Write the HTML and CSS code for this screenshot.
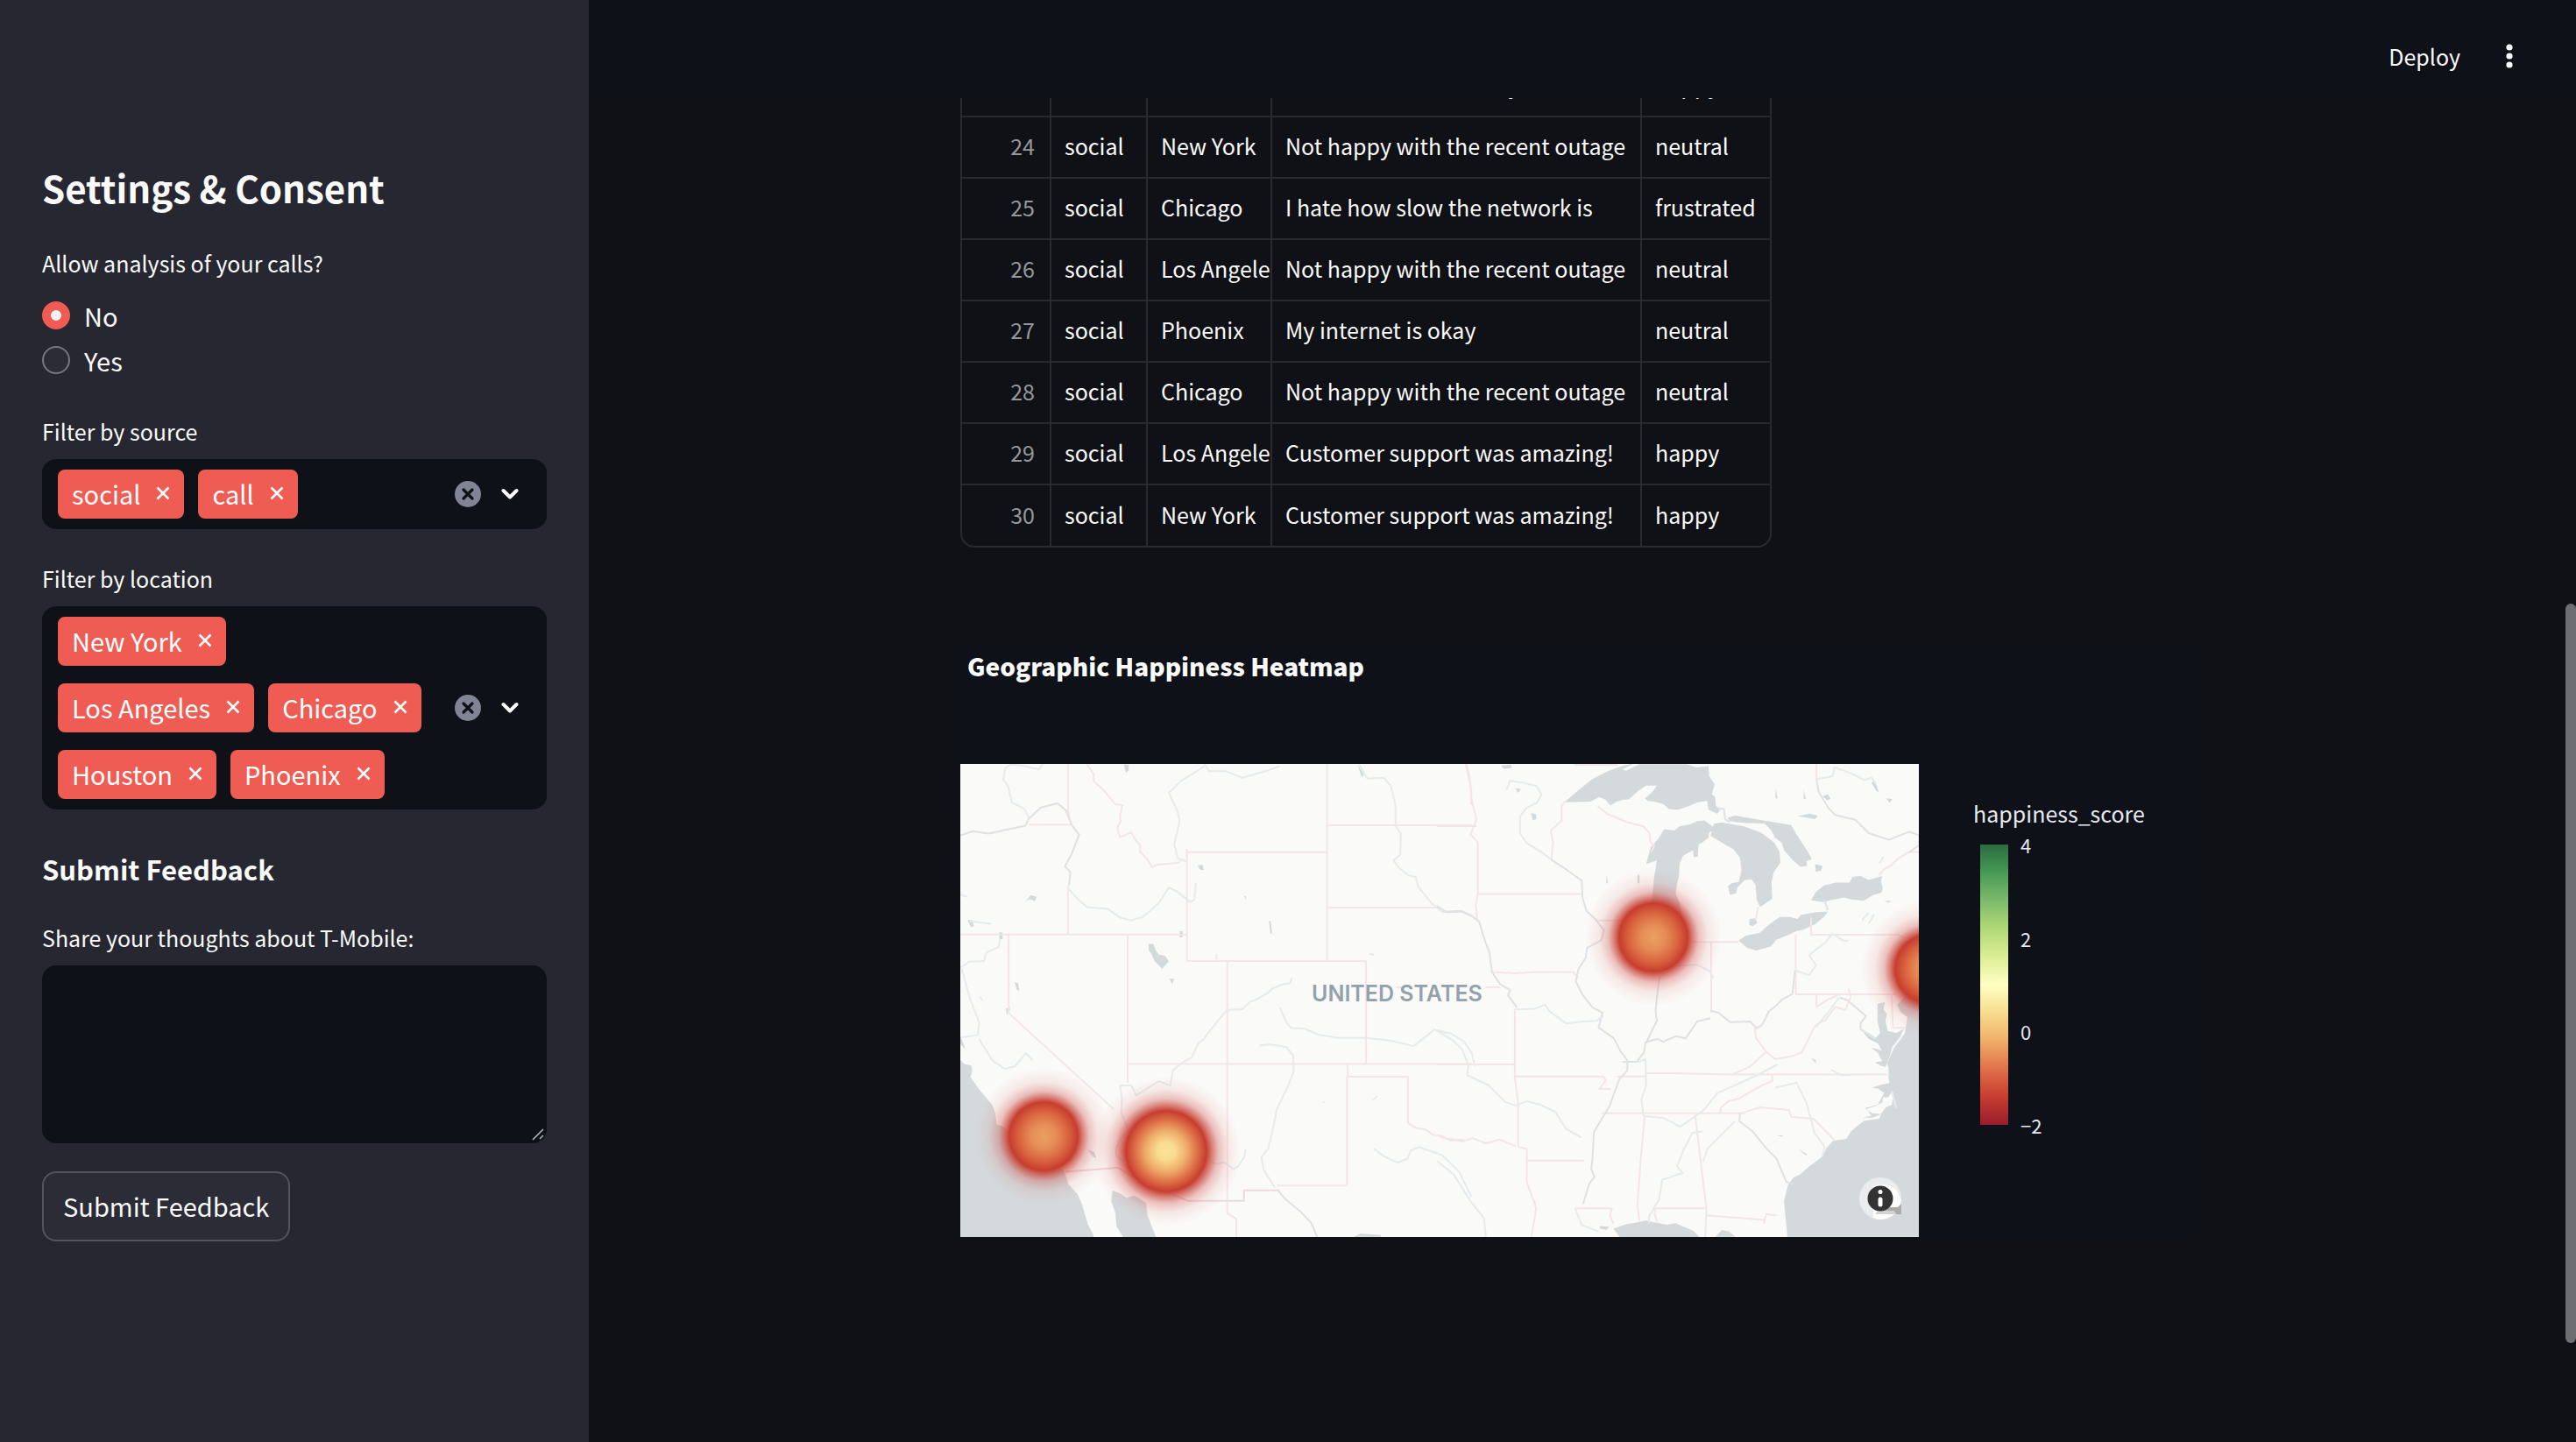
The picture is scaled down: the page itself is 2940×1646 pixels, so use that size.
FILE: index.html
```html
<!DOCTYPE html>
<html lang="en">
<head>
<meta charset="utf-8">
<meta name="viewport" content="width=device-width, initial-scale=1">
<title>Customer Happiness Dashboard</title>
<link rel="stylesheet" href="styles.css">
</head>
<body>
<svg class="defs" aria-hidden="true">
  <symbol id="cross" viewBox="0 0 16 16"><path d="M1.5 1.5l13 13M14.500 1.500l-13 13" stroke="currentColor" stroke-width="2.600" fill="none"/></symbol>
  <symbol id="clear" viewBox="0 0 30 30"><circle cx="15" cy="15" r="15" fill="#808495"/><path d="M10 10l10 10M20 10l-10 10" stroke="#0e1117" stroke-width="3.200" stroke-linecap="round"/></symbol>
  <symbol id="chevron" viewBox="0 0 20 14"><path d="M2.500 3l7.500 7.500L17.500 3" stroke="currentColor" stroke-width="4" stroke-linecap="round" stroke-linejoin="round" fill="none"/></symbol>
</svg>

<aside class="sidebar">
  <h2 class="sidebar-title">Settings &amp; Consent</h2>

  <fieldset class="field radio-group">
    <legend class="label">Allow analysis of your calls?</legend>
    <label class="radio"><input type="radio" name="consent" checked>No</label>
    <label class="radio"><input type="radio" name="consent">Yes</label>
  </fieldset>

  <div class="field" role="group" aria-labelledby="source-label">
    <div class="label" id="source-label">Filter by source</div>
    <div class="multiselect">
      <div class="tags">
        <button class="tag" type="button">social<svg class="cross"><use href="#cross"/></svg></button>
        <button class="tag" type="button">call<svg class="cross"><use href="#cross"/></svg></button>
      </div>
      <button class="icon-button" type="button" aria-label="Clear all"><svg class="clear"><use href="#clear"/></svg></button>
      <button class="icon-button" type="button" aria-label="Open"><svg class="chevron"><use href="#chevron"/></svg></button>
    </div>
  </div>

  <div class="field" role="group" aria-labelledby="location-label">
    <div class="label" id="location-label">Filter by location</div>
    <div class="multiselect">
      <div class="tags">
        <button class="tag" type="button">New York<svg class="cross"><use href="#cross"/></svg></button>
        <button class="tag" type="button">Los Angeles<svg class="cross"><use href="#cross"/></svg></button>
        <button class="tag" type="button">Chicago<svg class="cross"><use href="#cross"/></svg></button>
        <button class="tag" type="button">Houston<svg class="cross"><use href="#cross"/></svg></button>
        <button class="tag" type="button">Phoenix<svg class="cross"><use href="#cross"/></svg></button>
      </div>
      <button class="icon-button" type="button" aria-label="Clear all"><svg class="clear"><use href="#clear"/></svg></button>
      <button class="icon-button" type="button" aria-label="Open"><svg class="chevron"><use href="#chevron"/></svg></button>
    </div>
  </div>

  <h3 class="sidebar-subtitle">Submit Feedback</h3>
  <div class="field feedback">
    <label class="label" for="thoughts">Share your thoughts about T-Mobile:</label>
    <div class="textarea-wrap">
      <textarea class="textarea" id="thoughts"></textarea>
      <svg class="grip" viewBox="0 0 14 14" aria-hidden="true"><path d="M1 13L13 1M9 12l4-4" stroke="#b4b5b7" stroke-width="1.600"/></svg>
    </div>
  </div>
  <button class="submit" type="button">Submit Feedback</button>
</aside>

<div class="app">
  <header class="toolbar">
    <button class="deploy" type="button">Deploy</button>
    <button class="menu" type="button" aria-label="Main menu"><svg viewBox="0 0 8 28"><circle cx="4" cy="4" r="3.600"/><circle cx="4" cy="14" r="3.600"/><circle cx="4" cy="24" r="3.600"/></svg></button>
  </header>

  <main class="content">
    <div class="table-frame">
      <table class="data">
        <colgroup><col class="c-index"><col class="c-source"><col class="c-place"><col class="c-text"><col class="c-mood"></colgroup>
        <tbody>
          <tr><th scope="row">23</th><td>social</td><td>Houston</td><td>The network was really fast</td><td>happy</td></tr>
          <tr><th scope="row">24</th><td>social</td><td>New York</td><td>Not happy with the recent outage</td><td>neutral</td></tr>
          <tr><th scope="row">25</th><td>social</td><td>Chicago</td><td>I hate how slow the network is</td><td>frustrated</td></tr>
          <tr><th scope="row">26</th><td>social</td><td>Los Angeles</td><td>Not happy with the recent outage</td><td>neutral</td></tr>
          <tr><th scope="row">27</th><td>social</td><td>Phoenix</td><td>My internet is okay</td><td>neutral</td></tr>
          <tr><th scope="row">28</th><td>social</td><td>Chicago</td><td>Not happy with the recent outage</td><td>neutral</td></tr>
          <tr><th scope="row">29</th><td>social</td><td>Los Angeles</td><td>Customer support was amazing!</td><td>happy</td></tr>
          <tr><th scope="row">30</th><td>social</td><td>New York</td><td>Customer support was amazing!</td><td>happy</td></tr>
        </tbody>
      </table>
    </div>

    <section class="plot">
      <h4 class="plot-title">Geographic Happiness Heatmap</h4>
      <div class="plot-body">
        <svg class="map" viewBox="0 0 1094 540" role="img" aria-label="Heatmap of happiness over the United States">
          <defs>
            <radialGradient id="heat">
              <stop offset="0" stop-color="#eba062"/><stop offset=".18" stop-color="#e68d57"/><stop offset=".36" stop-color="#d9643f"/><stop offset=".5" stop-color="#c73d2f"/>
              <stop offset=".57" stop-color="#c83e32" stop-opacity=".68"/><stop offset=".66" stop-color="#ca4039" stop-opacity=".32"/><stop offset=".8" stop-color="#d04a45" stop-opacity=".1"/><stop offset="1" stop-color="#d85a55" stop-opacity="0"/>
            </radialGradient>
            <radialGradient id="heat-high">
              <stop offset="0" stop-color="#f9e297"/><stop offset=".12" stop-color="#f8dc90"/><stop offset=".28" stop-color="#eeab69"/><stop offset=".42" stop-color="#dd6e47"/><stop offset=".54" stop-color="#c73d2f"/>
              <stop offset=".61" stop-color="#c83e32" stop-opacity=".68"/><stop offset=".7" stop-color="#ca4039" stop-opacity=".32"/><stop offset=".83" stop-color="#d04a45" stop-opacity=".1"/><stop offset="1" stop-color="#d85a55" stop-opacity="0"/>
            </radialGradient>
            <clipPath id="badge"><circle cx="1050" cy="496" r="24"/></clipPath>
          </defs>
          <rect width="1094" height="540" fill="#fafaf8"/>

          <!-- western half -->
          <g transform="translate(-16 -172) scale(.38265 .47194)">
            <g class="water">
              <path d="M42 1080l12 10 20 4 4 12-6 16 30 34 34 32 10 20 4 28 22 6 32 20 60 54 60 10 28 24 12 30 28 26 14 26 16 46 16 24 6 30H42z"/>
              <path d="M496 1396l24 8 18 10 22-6 36 18 4 30 26 54H528l-20-26-4-34-12-28z"/>
              <path d="M604 800h14l6 14 10 12 18 2 12 14-20 18-10-8-14-12-8-16-8-8zM666 884h14l-6 14zM204 892l10 4 4 18-8-4zM178 956l12-4-2 16-8 2zM234 696l10-6 8-8 18 4-6 10-16-4zM158 772h10v16h-10zM696 768l10 2-2 14h-8zM422 1296l20 8 6 14-12-4zM530 366h14v14l-8 6zM64 742h14l4 14-8 4zM750 610l14-2 4 14-12-2zM42 1022l16 34-16-14zM888 684h6v10zM962 745h6l4 30h-6l-2-20z"/>
              <path d="M1226 366l20 24-6 8zM1216 1508l20-8 60 4v4z"/>
            </g>
            <g class="state">
              <path d="M363 364v112l10 36M246 511h127M363 660V777M42 777h676M718 578v262M718 578h418M1136 364v476M718 841h534v248M186 777v190L500 1200M541 777v358M541 1090h1027M838 841v610l27 14v43M1136 513h432M1136 712h332M418 364l22 26v16l34 26 30 30 22 2-8 24 2 16-10 14 8 24 34-12 14 20 12 10v16l22 20 14 18 14-6 64-4 14-8 12 4v-30M1196 1090l2 31h179v112l24 12 30 4 20 12 30 4 20 10 44-2M1195 1121v263H986M1548 364l18 60v40M1340 905h26"/>
              <path class="dark" d="M355 1351l157-10 62 30 146 50h168v-25h102"/>
            </g>
            <g class="river">
              <path class="dark" d="M42 537l38-10 46 6 110-19 12-20M248 496l34-26 50-10 24 16 18 36 22 24-22 46-20 30 16 14-4 32M988 1394l22 22 50 34 28 24 18 34M1480 722l56-2 32 12"/>
              <path d="M363 665l34 30 24 16 60 4 40 22 30 6 34-8M584 735l26-16 24-18 30-38 24 10 40 26 12-6 4-40M246 494l-14-22-36-14-12-40-14-16 6-28 20-10M196 366l30 2 50 10 12-14M770 364l14 18h50l50 16 60-14 50-14M770 370l-70 36-36 28 26 46 6 24-16 54 10 34 28 10M1232 366l24 34 50-2 20 20 14 46v50l16 20-2 50-20 14 14 16 30 20 22 4 8 24 40 40 30 20M1030 882l-4 12-24 4-30 10-10 8-36 18-20 6-24 18-46 2-54 54-14 16-16 10-20 34-30 14-26 18-8 36-34-10-48 24-20 10-14-24-28 0-6 0 6 30-2 36 20 42-20 20-16 24 0 16 20 14M996 955l18 34 14 14 40 2 42 14 60 8h80l70 6 74 14 62-40 50 10 40 20 22 28 8 30M934 1045l34-2 46 6 20 20 2 40-20 40-30 50-12 50-14 46-20 20 6 30 34 44M1276 1295l28 18 42 16 30-10 10-20 24-8 70 20 50 40 36 60M42 857l26-14 44-2 8-20 36-14 4-20M46 860l24 70 28 60-4 30-48 6M98 1030l40 52 36 20 30-6 34-32 20 18M892 1296l-2 18-20 24-14 6-20-12-10-4-18 4-20-6M1262 824l14 2M70 745l64 6M42 680l20 6M1124 1182h6M1270 1178l16-10M806 824v14M100 928l8 8"/>
            </g>
          </g>

          <!-- eastern half -->
          <g transform="translate(544 -32) scale(.38265)">
            <g class="water">
              <path d="M380 198l42-36 40-32 46-24 50-18 30-6-34 18 10 4 40-20h140l30 10 36-4 2 30 16 24-8 30 10 8 2 26 12 14-8 10-26-12-4-26-28 4-28 12-30 10-28-2-16-14-28-8-20-2-8-8 22-18 14-20-32 0-24 16-28 26-16 0-20 6-18 12-16-18-18-8-26 14z"/>
              <path d="M624 382l14-50 20-22 20-32 14 2 16 2 16-12 30-6 24-10 20-2 24 18 6 10-16 8-2 16-16 12-14 8-2 36-12 2-2-20-14 6-16 10-10 22-2 38-6 22-4 30 12 30 8 44-4 16h-90l2-64 8-76 8-48z"/>
              <path d="M826 262l24-4 66 12 50 18 40 30 16 28 2 32-20 30-6 30 2 48-36 24-10-20-4-46-12-16-20 2-22 22-4 18-18 4-6-26 10-8 22-4 8-34-4-38-20-26-28-16-40-24z"/>
              <path d="M866 244l24-6 60 10 70 12 36 6 24 40 20 30 8 12 10 20-16 6 2 14-20 2-24-20-24-28-8-24-20-14-12-24-18-18-30-2-20 0-30-2-24-4z"/>
              <path d="M900 610l22-14 40-8 30-26 30-22 30 0 24 6 10-12 46-8 34-2-12 16-26 22-36 16-20 4-20 10-40 16-16 20-44 12-28-8z"/>
              <path d="M1116 490l14-24 24-20 36-8 40 0 10-18 24-2 24 12 40-12-4 16 6 20-4 14-24 6-30 18-34-4-24-6-40 8-20 6z"/>
              <path d="M1437 776h-40l-24 26 10 22 20 14-8 50-14 20-16 20-14 30-8 20 4 14 0 30 6 30 8 14-4 34-18 8-12 16-8 18-44 6-20 14-20 18-14 22-40 6-20 22-10 24-40 30-28 24-20 10-16 22-12 48 6 60 4 46h407z"/>
              <path d="M1314 800l22-6-4 22 10 14-4 20 6 30 26 6 22-12-10 24-24 30-8 30-12 30-14-4-18-10 22-4-14-26-20-14 32 8-10-20-28-14-18-22 36 22 16-18-8-34zM1296 1050l30-10 30-6 4 24-14 20-16 0-2 16-20 10-30 10 22 12 26 2-26 10-30 2 26-8-18-22 36-10 10-16 10-20-20-12z"/>
              <path d="M526 1470l40-14 30-4 26-6 30 6 34 6 26-4 24 10 28 12 20 20H546zM830 1494l20-20 20 4 20 16zM484 1462l30 2-8 10-18-4zM192 88l30-2v10l-24 2zM280 230l16 4v14l-10 4zM234 156l16 2-8 12zM1128 382l22 6-4 14-16 4zM1076 240l34-8 26 6-8 10-26-4zM1150 180l16-6 8 14-10 4zM1296 140l10-6 12 34-8-4zM1340 186l18 2-8 12zM1010 156l6 30h-6zM1094 160l6 28h-6zM932 546l16-2 8 14-14 10-10-4zM598 414h6v26h-6zM506 414l4 26h-5zM1334 492h20l-6 6zM1116 962l14 4v10zM280 1370l14 20v12zM1078 1232l26 16-4 4zM1012 1192h18v4z"/>
            </g>
            <g class="state">
              <path d="M88 84l10 40 4 60 16 66-18 44 22 24v154l-6 30 4 46M0 269h118M122 472h308M380 198l-8 10v44l-32 30 6 36-4 50M480 210l30 24 60 24 46 12 18 20 2 26 12 10-8 20M474 551h74M760 615h140M818 615v210M164 704l70 4 60-4h112l16 18M144 750h44M0 980h232M232 816v200h264l8 12-20 25h36M232 1016l10 80v130M242 1226l26 6v98M268 1267h170M268 1330l28 80-14 84M490 1126h430M538 1016h84M622 1006h80l180 4h460M884 1008l50-22 48-44M948 872l4 30 30 40 26 22 50-8 30-12 20-40 20-40 30-16 30-40 30 10 16-40-6-24M1116 542v51h260l20 10M1070 593v178h300M1132 771v38l30-20 40-18M1356 771l4 100h36M1132 84v46M846 1124v-14l24-20 30-8 70-40 30-12v-22M904 1126l60-18 86 8 6 20 66 6 64 64M620 1130l-12 130-10 140 6 50M770 1130l24 200 10 80M650 1409h154M412 1409h110l-6 20 10 26M650 1409v20l8 22M804 1430l172 14v10l6-28 30 4M410 86h130M958 510l-8 40M0 1190l20 10 30 4 26 6 30-10 40 16 40-12 50 20M1437 346h-30l-34 22-20 20-20 10-16 18"/>
            </g>
            <g class="river">
              <path class="dark" d="M0 508l30 18 44-2 30 14 22 16 18 60 12 30 8 60 24 36 30 18-6 16 26 36 M342 370l40 26 50 36 2 50 12 40 26 24 26 34-8 30-42 22-4 30-22 34-8 36 20 40 30 38 30 16-12 44 46 32 20 40 20 26 0 30-24 26-14 38-14 40-30 50-18 30-4 80-4 30 10 24-16 20-18 60M816 820l24 6 34 28 60-2 20 20 16-10 20-40 20-16 20-20 30-16 8-70M816 842l-40 10-34 50-30-6-36 16-20-8-34 10-4 30-22 28-42 0M664 720l-8 60-4 40 4 30-20 40-12 26M904 1126l-2 24 40 30 40 50 30 30 30 70 20 6M1132 130l6 36 30 50 20 20 60 14 40 40 60 20 60-24 30 10v30l-30 22M1202 780l24 10 54 46-16 20 0 20 44 26M838 215l18 4 4 30 14 8M1156 490l10 30"/>
              <path d="M208 160l10-26 40 6 40 10 14 26-14 24-30 14-20 26 0 50 20 30 40 24 34 26M232 816l60-2 30-12 14 20 50 36 50-6 40-2 20-14M0 880l50 30 24 24 20 48-4 30 64 30 50 50 30 10 34-12 40 10 46 22 30 50 46 26M0 1268l50 40 50 80 40 50 6 56M1016 980l-60 32-120 54-40 50-70 50-50-26-60-6-6-50 14-40-2-80-24 10M888 1150l-80 80-14 40 M792 1180l-30 4-26 50-20 50 16 20-60 20-10 60-30 50v20M1008 1050l64-16 30 60 24 90 30 40-6 30M1070 700l40 14 20-30-20-30 50-40 20-24 30 20 16 2M664 720l50-34 60-4 40 20 10 20M412 1409l20 50 50 20M1130 130l50-10 6-26 50 18 40 20 20-8 14 20M1268 550l20-24M1288 560l16-28M1320 380l12-20M804 1410l-4 84M1130 870l40-50 30-40M1176 996l30 16h30M1356 1060l14 50"/>
            </g>
          </g>

          <text class="map-label" x="401" y="271">UNITED STATES</text>

          <circle cx="95" cy="425" r="78" fill="url(#heat)"/>
          <circle cx="235" cy="442" r="85" fill="url(#heat-high)"/>
          <circle cx="791" cy="198" r="78" fill="url(#heat)"/>
          <circle cx="1106" cy="234" r="78" fill="url(#heat)"/>

          <g clip-path="url(#badge)">
            <rect x="1026" y="472" width="48" height="48" fill="#ebeced"/>
            <path d="M1042 482q14-6 26 4 6 8 6 20v14h-32z" fill="#fff"/>
            <path d="M1044 514l6-8h24v8z" fill="#d2d2d2"/>
          </g>
          <path d="M1056 506h14l4-4v12h-6l-2-4h-10z" fill="#ababab"/>
          <circle cx="1050" cy="496" r="14.500" fill="#333"/>
          <circle cx="1050" cy="488.500" r="2.500" fill="#fff"/>
          <path d="M1050 497v6" stroke="#fff" stroke-width="5" stroke-linecap="round"/>
        </svg>

        <div class="legend">
          <div class="legend-title">happiness_score</div>
          <div class="legend-scale">
            <div class="legend-bar"></div>
            <div class="legend-ticks"><span>4</span><span>2</span><span>0</span><span>−2</span></div>
          </div>
        </div>
      </div>
    </section>
  </main>
</div>
<div class="scroll-thumb" aria-hidden="true"></div>
</body>
</html>
```
FILE: styles.css
```css
* { box-sizing: border-box; }

body {
  margin: 0;
  min-height: 100vh;
  display: flex;
  overflow: hidden;
  background: #101116;
  color: #fafafa;
  font: 25px/40px "Noto Sans CJK SC", "Noto Sans", sans-serif;
}

h2, h3, h4, fieldset { margin: 0; padding: 0; border: 0; }
button, textarea { font: inherit; color: inherit; border: 0; margin: 0; padding: 0; }
button { background: none; cursor: pointer; }
.defs { position: absolute; width: 0; height: 0; }

/* Sidebar */
.sidebar {
  flex: none;
  width: 672px;
  padding: 182px 48px 48px;
  background: #262730;
}
.sidebar-title { font-size: 42px; line-height: 64px; margin-bottom: 34px; }
.sidebar-subtitle { font-size: 31px; line-height: 48px; margin: 44px 0 34px; }
.label { display: block; padding: 0; line-height: 40px; margin-bottom: 12px; }
.field { margin-bottom: 36px; }
.radio-group .label { margin-bottom: 14px; }

.radio {
  display: flex;
  align-items: center;
  gap: 16px;
  height: 51px;
  font-size: 29px;
}
.radio input {
  appearance: none;
  width: 32px;
  height: 32px;
  margin: 0;
  border: 2px solid #77787e;
  border-radius: 50%;
  background: #2b2c36;
}
.radio input:checked { border: 10px solid #ee5c53; background: #f0f2f6; }

.multiselect {
  display: flex;
  align-items: center;
  min-height: 80px;
  padding: 12px 32px 12px 18px;
  border-radius: 16px;
  background: #0e1117;
}
.tags {
  flex: 1;
  display: flex;
  flex-wrap: wrap;
  gap: 20px 16px;
  margin-right: 28px;
}
.tag {
  display: flex;
  align-items: center;
  gap: 18px;
  height: 56px;
  padding: 0 16px 2px;
  border-radius: 8px;
  background: #ee5c53;
  color: #fff;
  font-size: 29px;
}
.cross { width: 16px; height: 16px; }
.icon-button { display: flex; }
.icon-button + .icon-button { margin-left: 23px; }
.clear { width: 30px; height: 30px; }
.chevron { width: 20px; height: 14px; }

.feedback { margin-bottom: 32px; }
.textarea-wrap { position: relative; }
.textarea {
  display: block;
  width: 100%;
  height: 203px;
  padding: 16px;
  border-radius: 16px;
  background: #0e1117;
  resize: none;
  outline: 0;
}
.grip { position: absolute; right: 3px; bottom: 3px; width: 14px; height: 14px; }
.submit {
  height: 80px;
  padding: 0 22px 2px;
  border: 2px solid #53545c;
  border-radius: 16px;
  background: #2b2c36;
  font-size: 29px;
}

/* Main area */
.app { flex: 1; min-width: 0; padding-right: 12px; }
.toolbar {
  position: relative;
  z-index: 1;
  display: flex;
  align-items: center;
  justify-content: flex-end;
  gap: 40px;
  height: 112px;
  padding: 16px 60px 0 0;
  margin-right: -12px;
  background: #0e1117;
}
.deploy { font-size: 25px; }
.menu { display: flex; padding: 0 12px; }
.menu svg { width: 8px; height: 28px; fill: #fafafa; }

.content { max-width: 1408px; margin: -51px auto 0; }

.table-frame {
  width: 926px;
  border: 2px solid #292a2f;
  border-radius: 16px;
  overflow: hidden;
}
.data { width: 100%; border-collapse: collapse; table-layout: fixed; }
.c-index { width: 101px; }
.c-source { width: 110px; }
.c-place { width: 142px; }
.c-text { width: 422px; }
.data th, .data td {
  height: 70px;
  padding: 0 0 4px 15px;
  border: 0 solid #292a2f;
  border-width: 0 0 2px 2px;
  font-weight: 400;
  text-align: left;
  white-space: nowrap;
  overflow: hidden;
}
.data th { padding: 0 17px 4px 0; border-left: 0; text-align: right; color: #96979b; }
.data tr:last-child > * { border-bottom: 0; }

.plot { margin-top: 111px; background: #0e1117; }
.plot-title { padding-left: 8px; margin-bottom: 88px; font-size: 28px; font-weight: 900; line-height: 48px; }
.plot-body { display: grid; grid-template-columns: 1fr 314px; }
.map { display: block; width: 100%; }
.water path { fill: #d4dadc; }
.state path, .river path { fill: none; stroke-width: 2; vector-effect: non-scaling-stroke; stroke-linejoin: round; }
.state path { stroke: #f3e6e8; }
.river path { stroke: #e6ebed; }
.state .dark { stroke: #ecd9dd; }
.river .dark { stroke: #dfe1e4; }
.map-label { fill: #93a1ac; font: 600 25px Inter, sans-serif; }

.legend { padding: 36px 0 0 62px; }
.legend-title { color: #e6eaf1; line-height: 40px; margin-bottom: 16px; }
.legend-scale { display: flex; gap: 14px; padding-left: 8px; }
.legend-bar {
  width: 32px;
  height: 320px;
  background: linear-gradient(#2c6b3e, #479a57 10%, #7dbb6c 20%, #b0d975 30%, #dcee94 40%, #feffc3 50%, #f8dc8e 60%, #f0ae69 70%, #e1704a 80%, #c63d30 90%, #981d2b);
}
.legend-ticks {
  display: flex;
  flex-direction: column;
  justify-content: space-between;
  margin: -15px 0;
  color: #e6eaf1;
  font-size: 22px;
  line-height: 30px;
}

.scroll-thumb {
  position: fixed;
  top: 689px;
  right: 0;
  bottom: 113px;
  width: 12px;
  border-radius: 6px;
  background: #6d6e72;
}
```
